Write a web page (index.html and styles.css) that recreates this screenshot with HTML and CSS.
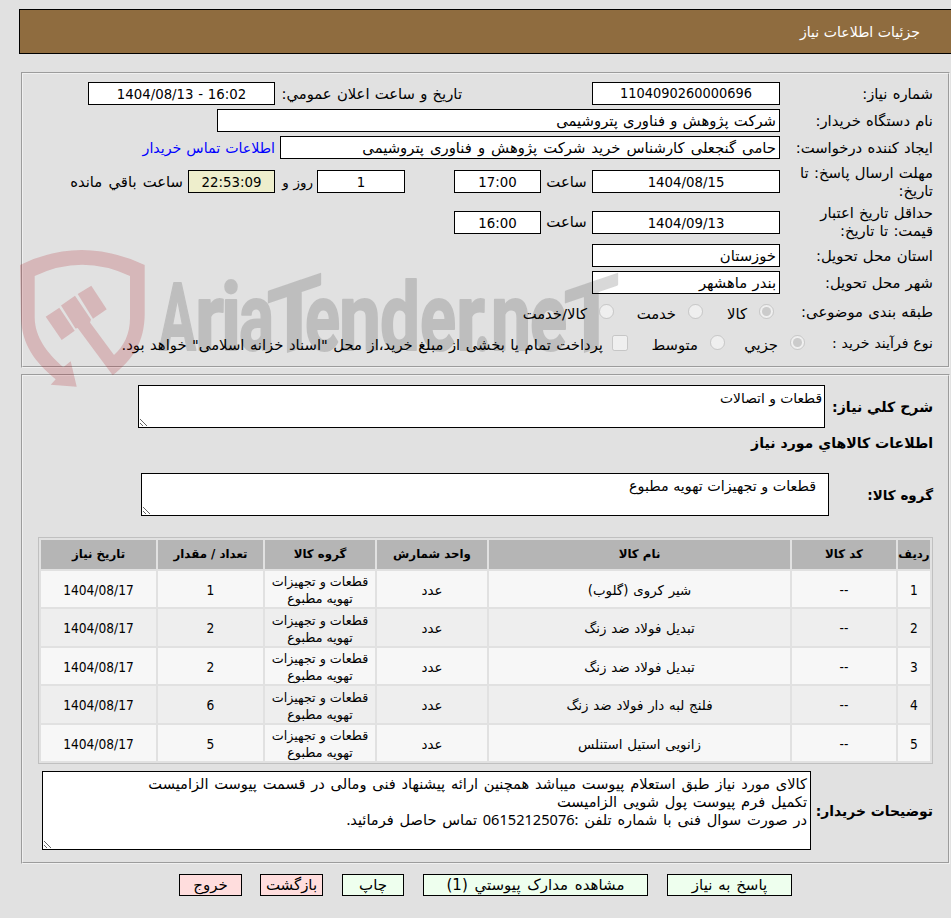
FILE: index.html
```html
<!doctype html>
<html lang="fa" dir="rtl">
<head>
    <meta charset="UTF-8">
    <meta name="viewport" content="width=device-width, initial-scale=1.0">
    <title>جزئیات اطلاعات نیاز</title>
    <link rel="stylesheet" href="styles.css">
</head>
<body>
<div class="header">جزئیات اطلاعات نیاز</div>

<div class="panel info">
    <div class="row">
        <div class="label">شماره نیاز:</div>
        <div class="box date number">1104090260000696</div>
        <div class="label-public">تاریخ و ساعت اعلان عمومي:</div>
        <div class="box date-public" dir="ltr">1404/08/13 - 16:02</div>
    </div>
    <div class="row">
        <div class="label">نام دستگاه خریدار:</div>
        <div class="box text buyer">شرکت پژوهش و فناوری پتروشیمی</div>
    </div>
    <div class="row">
        <div class="label">ایجاد کننده درخواست:</div>
        <div class="box text creator">حامی گنجعلی کارشناس خرید شرکت پژوهش و فناوری پتروشیمی</div>
        <a class="contact" href="#">اطلاعات تماس خریدار</a>
    </div>
    <div class="row tall">
        <div class="label">مهلت ارسال پاسخ: تا<br>تاریخ:</div>
        <div class="box date">1404/08/15</div>
        <div class="hour">ساعت</div>
        <div class="box time">17:00</div>
        <div class="box days">1</div>
        <div class="day-text">روز و</div>
        <div class="box time remain">22:53:09</div>
        <div class="left-text">ساعت باقي مانده</div>
    </div>
    <div class="row tall validity">
        <div class="label">حداقل تاریخ اعتبار<br>قیمت: تا تاریخ:</div>
        <div class="box date">1404/09/13</div>
        <div class="hour">ساعت</div>
        <div class="box time">16:00</div>
    </div>
    <div class="row">
        <div class="label">استان محل تحویل:</div>
        <div class="box text place">خوزستان</div>
    </div>
    <div class="row">
        <div class="label">شهر محل تحویل:</div>
        <div class="box text place">بندر ماهشهر</div>
    </div>
    <div class="row options subject">
        <div class="label">طبقه بندی موضوعی:</div>
        <input type="radio" name="subject" checked disabled><label class="w-goods">کالا</label>
        <input type="radio" name="subject" disabled><label class="w-service">خدمت</label>
        <input type="radio" name="subject" disabled><label>کالا/خدمت</label>
    </div>
    <div class="row options process">
        <div class="label">نوع فرآیند خرید :</div>
        <input type="radio" name="process" checked disabled><label class="w-small">جزيي</label>
        <input type="radio" name="process" disabled><label class="w-medium">متوسط</label>
        <input type="checkbox" disabled><label class="pay">پرداخت تمام یا بخشی از مبلغ خرید،از محل "اسناد خزانه اسلامی" خواهد بود.</label>
    </div>
</div>

<div class="panel goods">
    <div class="area-row">
        <div class="title">شرح کلي نیاز:</div>
        <textarea class="summary">قطعات و اتصالات</textarea>
    </div>
    <h2>اطلاعات کالاهاي مورد نیاز</h2>
    <div class="area-row">
        <div class="title group-title">گروه کالا:</div>
        <textarea class="group">قطعات و تجهیزات تهویه مطبوع</textarea>
    </div>

    <table>
        <thead>
        <tr>
            <th class="c1">ردیف</th>
            <th class="c2">کد کالا</th>
            <th class="c3">نام کالا</th>
            <th class="c4">واحد شمارش</th>
            <th class="c5">گروه کالا</th>
            <th class="c6">تعداد / مقدار</th>
            <th class="c7">تاریخ نیاز</th>
        </tr>
        </thead>
        <tbody>
        <tr>
            <td>1</td>
            <td>--</td>
            <td class="name">شیر کروی (گلوب)</td>
            <td class="unit">عدد</td>
            <td class="cat">قطعات و تجهیزات<br>تهویه مطبوع</td>
            <td>1</td>
            <td>1404/08/17</td>
        </tr>
        <tr>
            <td>2</td>
            <td>--</td>
            <td class="name">تبدیل فولاد ضد زنگ</td>
            <td class="unit">عدد</td>
            <td class="cat">قطعات و تجهیزات<br>تهویه مطبوع</td>
            <td>2</td>
            <td>1404/08/17</td>
        </tr>
        <tr>
            <td>3</td>
            <td>--</td>
            <td class="name">تبدیل فولاد ضد زنگ</td>
            <td class="unit">عدد</td>
            <td class="cat">قطعات و تجهیزات<br>تهویه مطبوع</td>
            <td>2</td>
            <td>1404/08/17</td>
        </tr>
        <tr>
            <td>4</td>
            <td>--</td>
            <td class="name">فلنج لبه دار فولاد ضد زنگ</td>
            <td class="unit">عدد</td>
            <td class="cat">قطعات و تجهیزات<br>تهویه مطبوع</td>
            <td>6</td>
            <td>1404/08/17</td>
        </tr>
        <tr>
            <td>5</td>
            <td>--</td>
            <td class="name">زانویی استیل استنلس</td>
            <td class="unit">عدد</td>
            <td class="cat">قطعات و تجهیزات<br>تهویه مطبوع</td>
            <td>5</td>
            <td>1404/08/17</td>
        </tr>
        </tbody>
    </table>

    <div class="area-row">
        <div class="title">توضیحات خریدار:</div>
        <textarea class="notes">کالای مورد نیاز طبق استعلام پیوست میباشد همچنین ارائه پیشنهاد فنی ومالی در قسمت پیوست الزامیست
تکمیل فرم پیوست پول شویی الزامیست
در صورت سوال فنی با شماره تلفن :06152125076 تماس حاصل فرمائید.</textarea>
    </div>
</div>

<div class="buttons">
    <button class="green answer">پاسخ به نیاز</button>
    <button class="green docs">مشاهده مدارک پیوستي (1)</button>
    <button class="green print">چاپ</button>
    <button class="red">بازگشت</button>
    <button class="red exit">خروج</button>
</div>

<!-- Watermark -->
<svg class="watermark" width="605" height="150" viewBox="18 244 605 150" direction="ltr" aria-hidden="true">
    <g fill="#aa0f19" fill-opacity="0.2">
        <path d="M20 265 Q81 235 144.700 265 V312 C145 343 132 360 112.700 375.300 L77.700 328 L75.500 328.500 L61 305.500 L75 295.700 L91 319.500 L90 322.500 L114 355 C124 346 130 334 130 318 V276 Q82 253.500 34.700 276 V318 C35 337 47 353 63.300 367.300 L70.700 361.300 L76.700 386.700 L50.700 384.700 L55.700 379.300 C35 362 22 345 21 318 Z"/>
        <path d="M45.700 316.700 L59.300 307.700 L74.700 330.700 L61.700 340 Z"/>
        <path d="M77.700 294 L91.300 285.700 L106.700 309.300 L93 318.700 Z"/>
    </g>
    <g class="mark-text">
        <text x="159" y="350" textLength="37" lengthAdjust="spacingAndGlyphs">A</text>
        <text x="195" y="350" textLength="29" lengthAdjust="spacingAndGlyphs">r</text>
        <text x="221" y="350" textLength="20" lengthAdjust="spacingAndGlyphs">i</text>
        <text x="239" y="350" textLength="35" lengthAdjust="spacingAndGlyphs">a</text>
        <text transform="translate(267 359) skewY(-19)" textLength="55" lengthAdjust="spacingAndGlyphs">T</text>
        <text x="305" y="350" textLength="35" lengthAdjust="spacingAndGlyphs">e</text>
        <text x="339" y="350" textLength="42" lengthAdjust="spacingAndGlyphs">n</text>
        <text x="380" y="350" textLength="40" lengthAdjust="spacingAndGlyphs">d</text>
        <text x="420" y="350" textLength="36" lengthAdjust="spacingAndGlyphs">e</text>
        <text x="456" y="350" textLength="29" lengthAdjust="spacingAndGlyphs">r</text>
        <text x="474" y="350" textLength="17" lengthAdjust="spacingAndGlyphs">.</text>
        <text x="491" y="350" textLength="40" lengthAdjust="spacingAndGlyphs">n</text>
        <text x="530" y="350" textLength="37" lengthAdjust="spacingAndGlyphs">e</text>
        <text transform="translate(564 359) skewY(-19)" textLength="55" lengthAdjust="spacingAndGlyphs">T</text>
    </g>
</svg>
</body>
</html>
```

FILE: styles.css
```css
* {
    box-sizing: border-box;
}

html {
    overflow: hidden;
}

body {
    position: relative;
    margin: 0;
    padding-top: 9px;
    height: 918px;
    overflow: hidden;
    background-color: #e1e1e1;
    color: #000;
    font-family: "DejaVu Sans", sans-serif;
    font-size: 14.8px;
    line-height: 18px;
}

.header {
    margin-left: 19px;
    height: 45px;
    padding-right: 31px;
    border: 1px solid #000;
    border-right: none;
    background-color: #8f6c3f;
    color: #fff;
    font-size: 14.1px;
    line-height: 44px;
}

.panel {
    margin: 0 1px 0 21px;
    padding-right: 15px;
    border: 2px groove #f0f0f0;
}

.info {
    height: 296px;
    margin-top: 18px;
    padding-top: 6px;
}

.row {
    display: flex;
    align-items: center;
    height: 27px;
    white-space: nowrap;
    word-spacing: 0.5px;
}

.tall {
    height: 41px;
}

.validity {
    height: 40px;
}

.label {
    flex: none;
    width: 153px;
}

.box {
    flex: none;
    height: 23px;
    border: 1px solid #000;
    background-color: #fff;
    text-align: center;
    font-family: "DejaVu Sans Condensed", sans-serif;
    font-size: 14.8px;
    line-height: 21px;
}

.text {
    padding-right: 3px;
    text-align: right;
    font-family: "DejaVu Sans", sans-serif;
    font-size: 14.8px;
}

.date, .place {
    width: 188px;
}

.number {
    font-size: 14.4px;
}

.label-public {
    width: 187px;
    margin-right: 130px;
}

.date-public {
    width: 187px;
}

.buyer {
    width: 563px;
}

.creator {
    width: 500px;
    word-spacing: 1.3px;
}

.contact {
    margin-right: 5px;
    color: #0000ff;
    font-size: 14.2px;
    text-decoration: none;
}

.hour {
    width: 51px;
    text-align: center;
}

.time {
    width: 87px;
}

.days {
    width: 88px;
    margin-right: 49px;
}

.day-text {
    width: 42px;
    padding-right: 4px;
    font-size: 13.5px;
}

.remain {
    background-color: #eeeecc;
}

.left-text {
    margin-right: 5px;
    word-spacing: 1.5px;
}

.options {
    height: 31px;
}

.options input {
    flex: none;
    width: 15px;
    height: 15px;
    margin: 0 0 0 12px;
}

.options input[type="checkbox"] {
    width: 16px;
    height: 16px;
    margin-left: 9px;
}

.options label {
    flex: none;
    padding-top: 4px;
}

.options .pay {
    padding-top: 5px;
    word-spacing: 0.8px;
}

.subject .label {
    width: 159px;
}

.w-goods {
    width: 44px;
}

.w-service {
    width: 62px;
}

.process .label {
    width: 128px;
    font-size: 14.1px;
}

.w-small {
    width: 53px;
}

.w-medium {
    width: 70px;
}

.goods {
    height: 490px;
    margin-top: 6px;
    padding-top: 9px;
}

.area-row {
    display: flex;
    align-items: center;
    white-space: nowrap;
}

.title, h2 {
    font-size: 14.1px;
    font-weight: bold;
}

.title {
    flex: none;
    width: 108px;
}

h2 {
    margin: 6px 0 20px;
    line-height: 19px;
}

textarea {
    display: block;
    margin: 0;
    padding: 3px 2px;
    border: 1px solid #000;
    border-radius: 0;
    background-color: #fff;
    color: #000;
    font-family: "DejaVu Sans", sans-serif;
    font-size: 14.3px;
    line-height: 18px;
    overflow: hidden;
}

.summary {
    width: 687px;
    height: 43px;
    font-size: 13.8px;
}

.group-title {
    width: 104px;
    font-size: 13.5px;
}

.group {
    width: 688px;
    height: 43px;
    padding-right: 12px;
}

table {
    width: 895px;
    margin: 21px 0 7px;
    border: 1px solid #c0c0c0;
    border-spacing: 2px;
    table-layout: fixed;
}

th, td {
    height: 36px;
    padding: 0;
    text-align: center;
    line-height: 17px;
}

th {
    height: 29px;
    background-color: #b5b5b5;
    font-size: 11.8px;
    white-space: nowrap;
}

td {
    padding-top: 2px;
    background-color: #f7f7f7;
    font-family: "DejaVu Sans Condensed", sans-serif;
    font-size: 13.6px;
}

tbody tr:nth-child(even) td {
    height: 37px;
    background-color: #eee;
}

.name, .unit, .cat {
    font-family: "DejaVu Sans", sans-serif;
    font-size: 13.4px;
}

.name {
    word-spacing: 0.5px;
}

.cat {
    font-size: 12.7px;
}

.c1 {
    width: 32px;
}

.c2 {
    width: 104px;
}

.c3 {
    width: 301px;
}

.c4, .c5 {
    width: 110px;
}

.c6 {
    width: 105px;
}

.c7 {
    width: 115px;
}

/* narrow digits for the phone number, Arabic letters come from DejaVu */
.notes {
    width: 769px;
    height: 79px;
    padding: 2px 3px;
    font-family: "Noto Sans", "DejaVu Sans", sans-serif;
    font-size: 14.6px;
    word-spacing: 2px;
}

.goods .area-row:last-child .title {
    width: 122px;
    font-size: 13.9px;
}

.buttons {
    display: flex;
    gap: 19px;
    margin-top: 10px;
    padding-right: 159px;
}

button {
    width: 63px;
    height: 22px;
    padding: 0;
    border: 1px solid #000;
    color: #000;
    font-family: inherit;
    font-size: 15px;
    line-height: 20px;
    white-space: nowrap;
}

.green {
    background-color: #eeffee;
}

.red {
    background-color: #ffdddd;
}

.answer {
    width: 125px;
    word-spacing: 1px;
}

.docs {
    width: 225px;
    word-spacing: 2px;
}

.print {
    width: 62px;
}

.exit {
    margin-right: -1px;
}

.watermark {
    position: absolute;
    top: 244px;
    left: 18px;
    pointer-events: none;
}

.mark-text {
    fill: #000;
    stroke: #000;
    stroke-width: 2;
    stroke-linejoin: round;
    opacity: 0.15;
    font-family: Roboto, sans-serif;
    font-size: 94px;
    font-weight: bold;
}
```
